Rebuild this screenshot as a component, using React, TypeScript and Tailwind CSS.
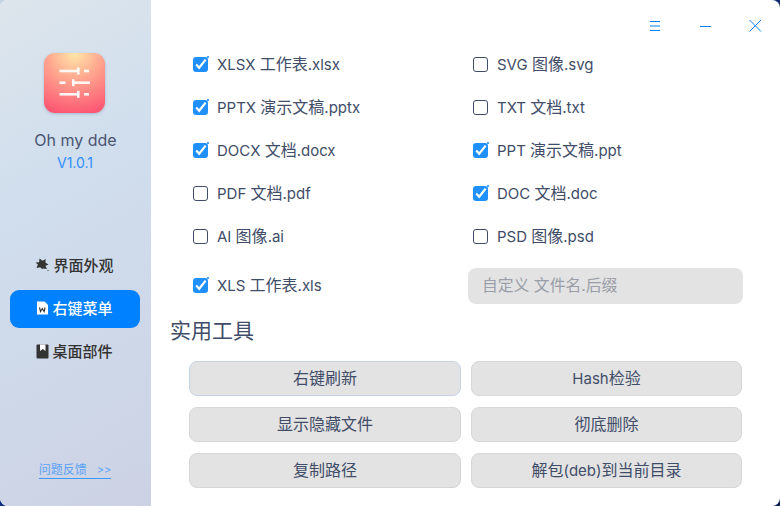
const FONT = "font-['Inter','Noto_Sans_CJK_SC',sans-serif]";

function Mixed({ text }: { text: string }) {
  const parts = text.split(/([\u4e00-\u9fff]+)/);
  return (
    <>
      {parts.map((p, i) =>
        i % 2 === 1 ? (
          <span key={i} className="text-[16px]">{p}</span>
        ) : (
          <span key={i}>{p}</span>
        ),
      )}
    </>
  );
}

function Check({ on }: { on: boolean }) {
  if (!on)
    return <span className="box-border block h-[15px] w-[15px] shrink-0 rounded-[3px] border-[1.5px] border-[#414d68] bg-white" />;
  return (
    <svg width="17" height="17" viewBox="0 0 17 17" className="mr-[-2px] mt-[-2px] shrink-0">
      <rect x="0" y="2" width="15" height="15" rx="3" fill="#2090ff" />
      <path d="M3.2 9.5l3 3.2L12.6 4.6" fill="none" stroke="#fff" strokeWidth="2.2" />
      <circle cx="15" cy="2" r="1.1" fill="#2090ff" />
    </svg>
  );
}

function Row({ on, label }: { on: boolean; label: string }) {
  return (
    <div className="flex h-[43px] items-center">
      <span className="flex w-[24px] shrink-0 items-center"><Check on={on} /></span>
      <span className="pb-[2px] text-[15px] leading-none text-[#414d68]"><Mixed text={label} /></span>
    </div>
  );
}

function Btn({ label, first }: { label: string; first?: boolean }) {
  return (
    <button className={`box-border flex h-[35px] items-center justify-center rounded-[8px] border bg-[#e3e3e3] pb-[2px] text-[15px] leading-none text-[#414d68] ${first ? "border-[#c5d3e6]" : "border-[#d4d6da]"}`}>
      <span><Mixed text={label} /></span>
    </button>
  );
}

function Logo() {
  return (
    <div className="mr-[2px] flex h-[60px] w-[61px] items-center justify-center rounded-[11px] bg-[radial-gradient(circle_at_50%_0%,#ffe8a8_0%,#ffa68f_40%,#fb4a6e_100%)] shadow-[0_1px_3px_rgba(80,90,120,0.3)]">
      <svg width="32" height="32" viewBox="0 0 32 32" fill="#fff" fillOpacity="0.9">
        <rect x="0.5" y="2.7" width="19" height="2.6" />
        <rect x="18" y="0.5" width="2.6" height="7" />
        <rect x="25" y="2.7" width="5" height="2.6" />
        <rect x="0.5" y="14.4" width="6" height="2.6" />
        <rect x="13" y="12.2" width="2.6" height="7" />
        <rect x="14" y="14.4" width="17" height="2.6" />
        <rect x="0.5" y="26" width="19" height="2.6" />
        <rect x="18" y="23.8" width="2.6" height="7" />
        <rect x="25" y="26" width="5" height="2.6" />
      </svg>
    </div>
  );
}

function NavItem({ label, icon, active }: { label: string; icon: React.ReactNode; active?: boolean }) {
  return (
    <div className={`flex h-[38px] w-[130px] items-center justify-center gap-[3px] rounded-[9px] pb-[2px] text-[15px] font-medium leading-none ${active ? "bg-[#0081ff] text-white" : "text-[#333333]"}`}>
      {icon}
      <span>{label}</span>
    </div>
  );
}

const StarIcon = (
  <svg width="15" height="14" viewBox="0 0 15 14" fill="#333">
    <path d="M4.5 0.5l3 2.2 3.2-1.7-.3 3.5 3.2 2.3-3.2 1 1.6 3.2-3.6-.6-1.4.6-1.8-1.8-3.7.7 1.4-3.5L0.5 4.5l3.6-.3z" />
    <circle cx="13" cy="12.5" r="0.6" />
  </svg>
);
const DocIcon = (
  <svg width="13" height="14" viewBox="0 0 13 14">
    <path d="M1 0.5h7.5l3.5 3.5v9.5H1z" fill="#fff" />
    <path d="M3.5 6.5l1 4 1.8-3 1.8 3 1-4" fill="none" stroke="#333" strokeWidth="1.1" />
  </svg>
);
const BookIcon = (
  <svg width="13" height="15" viewBox="0 0 13 15">
    <rect x="0.5" y="0.5" width="12" height="14" rx="1" fill="#333" />
    <path d="M4 0.5h5.5v6.5l-2.7-2-2.8 2z" fill="#fff" />
  </svg>
);

export default function App() {
  return (
    <div className="h-[506px] w-[780px] overflow-hidden bg-[linear-gradient(135deg,#c4d4e6_0%,#c4d4e6_8%,#12358f_20%,#0a1f55_100%)]">
      <div className={`flex h-full w-full overflow-hidden rounded-[8px] bg-white ${FONT}`}>
        <aside className="flex w-[151px] shrink-0 flex-col items-center bg-[linear-gradient(150deg,#dde5ec_0%,#d0deed_35%,#ccd2e4_100%)] pt-[53px]">
          <Logo />
          <div className="mt-[17px] text-[16px] leading-[20px] text-[#4a5570]">Oh my dde</div>
          <div className="mr-[1px] mt-[4px] text-[14px] leading-[18px] text-[#2f8fff]">V1.0.1</div>
          <nav className="mr-[2px] mt-[75px] flex flex-col gap-[5px]">
            <NavItem label="界面外观" icon={StarIcon} />
            <NavItem label="右键菜单" icon={DocIcon} active />
            <NavItem label="桌面部件" icon={BookIcon} />
          </nav>
          <a className="mr-[1px] mt-[91px] border-b border-[#3f98ff] text-[12px] leading-[16px] text-[#5ca3f7] whitespace-pre">问题反馈   <span className="text-[11px]">&gt;&gt;</span></a>
        </aside>
        <main className="relative flex min-w-0 flex-1 flex-col pl-[19px] pt-[43px]">
          <div className="absolute left-[498px] top-[19px] flex items-start gap-[38px]">
            <svg width="12" height="13" viewBox="0 0 12 13" stroke="#0081ff" strokeWidth="1"><path d="M1 2.5h10M1 7h10M1 11.5h10" /></svg>
            <svg width="12" height="13" viewBox="0 0 12 13" stroke="#0081ff" strokeWidth="1"><path d="M1 7.5h11" /></svg>
            <svg width="13" height="13" viewBox="0 0 13 13" stroke="#0081ff" strokeWidth="1" fill="none"><path d="M0.5 1l11.5 11.5M12 1L0.5 12.5" /></svg>
          </div>
          <div className="ml-[23px] grid w-[560px] grid-cols-[280px_280px]">
            <Row on label="XLSX 工作表.xlsx" />
            <Row on={false} label="SVG 图像.svg" />
            <Row on label="PPTX 演示文稿.pptx" />
            <Row on={false} label="TXT 文档.txt" />
            <Row on label="DOCX 文档.docx" />
            <Row on label="PPT 演示文稿.ppt" />
            <Row on={false} label="PDF 文档.pdf" />
            <Row on label="DOC 文档.doc" />
            <Row on={false} label="AI 图像.ai" />
            <Row on={false} label="PSD 图像.psd" />
          </div>
          <div className="ml-[23px] mt-[6px] grid w-[550px] grid-cols-[275px_275px] items-center">
            <Row on label="XLS 工作表.xls" />
            <div className="flex h-[36px] items-center rounded-[8px] bg-[#e3e3e3] pl-[14px] text-[15.8px] leading-none text-[#9a9ea8]">自定义 文件名.后缀</div>
          </div>
          <h2 className="mt-[10px] text-[21px] font-normal leading-[28px] text-[#414d68]">实用工具</h2>
          <div className="ml-[19px] mt-[16px] grid w-[553px] grid-cols-[272px_271px] gap-x-[10px] gap-y-[11px]">
            <Btn first label="右键刷新" />
            <Btn label="Hash检验" />
            <Btn label="显示隐藏文件" />
            <Btn label="彻底删除" />
            <Btn label="复制路径" />
            <Btn label="解包(deb)到当前目录" />
          </div>
        </main>
      </div>
    </div>
  );
}
